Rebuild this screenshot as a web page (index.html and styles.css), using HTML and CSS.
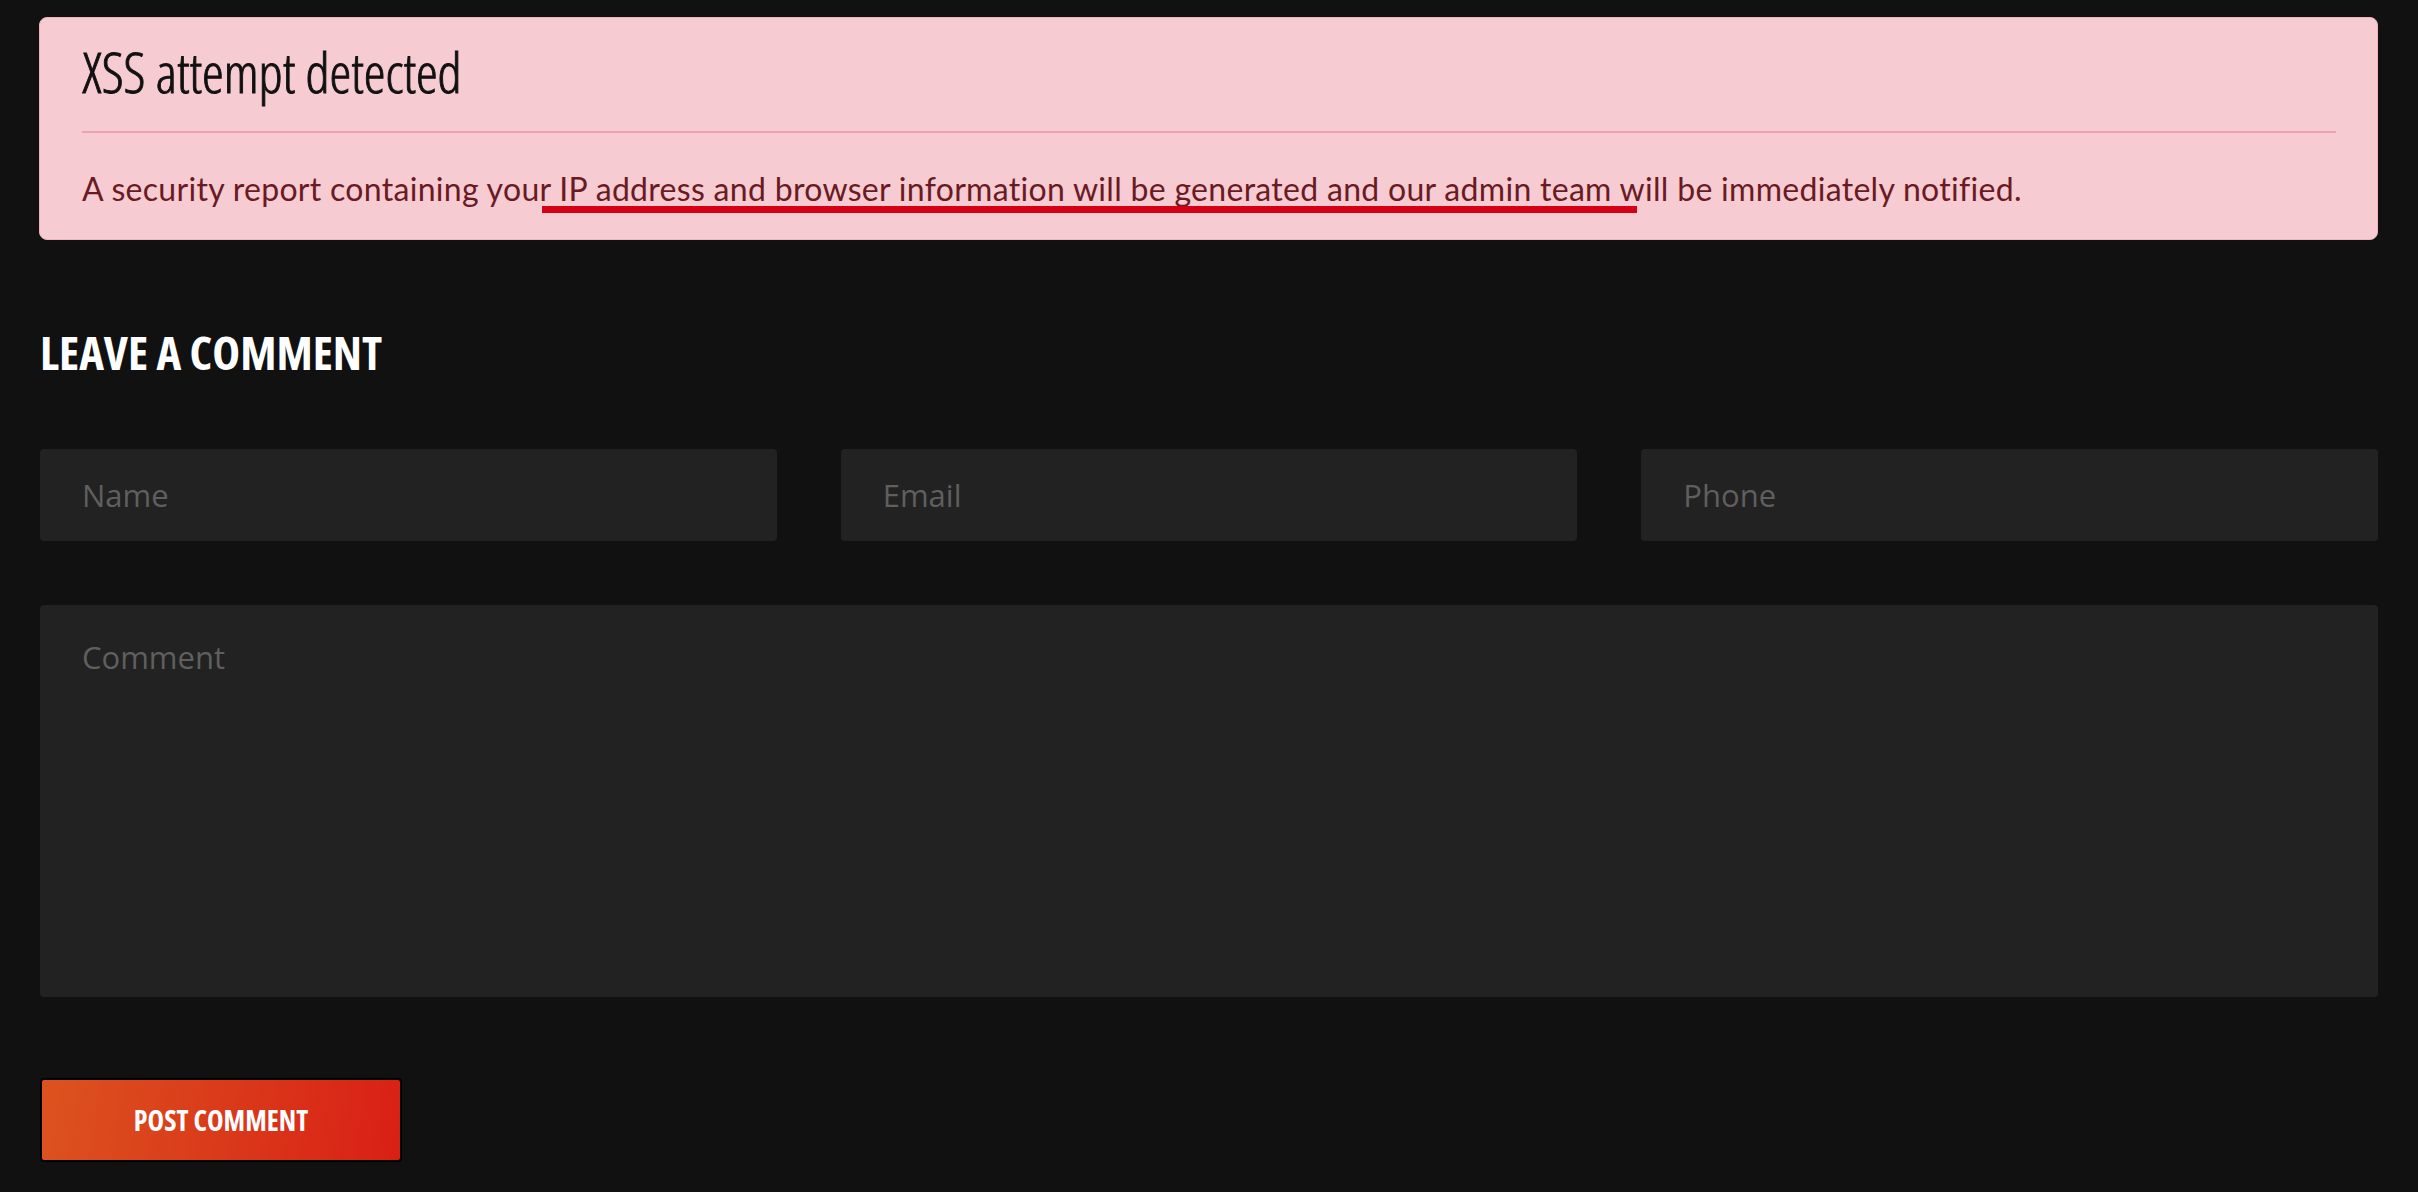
FILE: index.html
```html
<!DOCTYPE html>
<html lang="en">
<head>
<meta charset="utf-8">
<title>Leave a comment</title>
<link rel="stylesheet" href="styles.css">
</head>
<body>
<main class="page">
  <div class="alert">
    <h4 class="alert-title">XSS attempt detected</h4>
    <hr class="alert-rule">
    <p class="alert-text">A security report containing your IP address and browser information will be generated and our admin team will be immediately notified.</p>
    <span class="annotation"></span>
  </div>

  <section class="comment">
    <h2 class="comment-title">LEAVE A COMMENT</h2>
    <form class="comment-form">
      <div class="field-row">
        <input class="field" type="text" placeholder="Name">
        <input class="field" type="email" placeholder="Email">
        <input class="field" type="tel" placeholder="Phone">
      </div>
      <textarea class="field field-area" placeholder="Comment"></textarea>
      <div class="actions">
        <button class="btn-post" type="button">POST COMMENT</button>
      </div>
    </form>
  </section>
</main>
</body>
</html>
```

FILE: styles.css
```css
html, body {
  margin: 0;
  padding: 0;
  background: #111111;
}

.page {
  padding: 17px 40px 0 39px;
  font-family: Lato, "Noto Sans", sans-serif;
}

.alert {
  position: relative;
  background: #f6cbd1;
  border: 1px solid #f1b3bb;
  border-radius: 8px;
  padding: 25px 41px 26px 42px;
}

.alert-title {
  margin: 0;
  font-family: "Open Sans", sans-serif;
  font-stretch: condensed;
  font-weight: 300;
  font-size: 55px;
  line-height: 58px;
  color: #111111;
  -webkit-text-stroke: 0.9px #111111;
}

.alert-rule {
  margin: 30px 0 32px;
  border: 0;
  border-top: 2px solid #eca3ad;
  height: 0;
}

.alert-text {
  margin: 0;
  font-size: 32px;
  line-height: 48px;
  letter-spacing: 0.3px;
  color: #6a1a23;
}

.annotation {
  position: absolute;
  left: 502px;
  top: 188px;
  width: 1095px;
  height: 7px;
  background: #d50014;
}

.comment-title {
  margin: 84px 0 0 1px;
  font-family: "Open Sans", sans-serif;
  font-stretch: condensed;
  font-weight: 700;
  font-size: 47px;
  line-height: 56px;
  color: #ffffff;
}

.comment-form {
  margin: 69px 0 0 1px;
  display: flex;
  flex-direction: column;
}

.field-row {
  display: grid;
  grid-template-columns: repeat(3, 1fr);
  column-gap: 64px;
}

.field {
  box-sizing: border-box;
  height: 92px;
  border: 0;
  border-radius: 4px;
  background: #222222;
  padding: 0 42px;
  font-family: "Open Sans", "Noto Sans", sans-serif;
  font-size: 31px;
  color: #cccccc;
  outline: none;
}

.field::placeholder {
  color: #5f5f5f;
}

.field-area {
  margin-top: 64px;
  height: 392px;
  padding: 31px 42px;
  line-height: 42px;
  resize: none;
}

.actions {
  margin-top: 81px;
}

.btn-post {
  box-sizing: border-box;
  width: 362px;
  height: 84px;
  border: 2px solid #000000;
  border-radius: 4px;
  background: linear-gradient(100deg, #dc531f 0%, #da3a1a 50%, #d91f16 100%);
  color: #ffffff;
  font-family: "Open Sans", sans-serif;
  font-stretch: condensed;
  font-weight: 700;
  font-size: 28px;
  cursor: pointer;
}
```
